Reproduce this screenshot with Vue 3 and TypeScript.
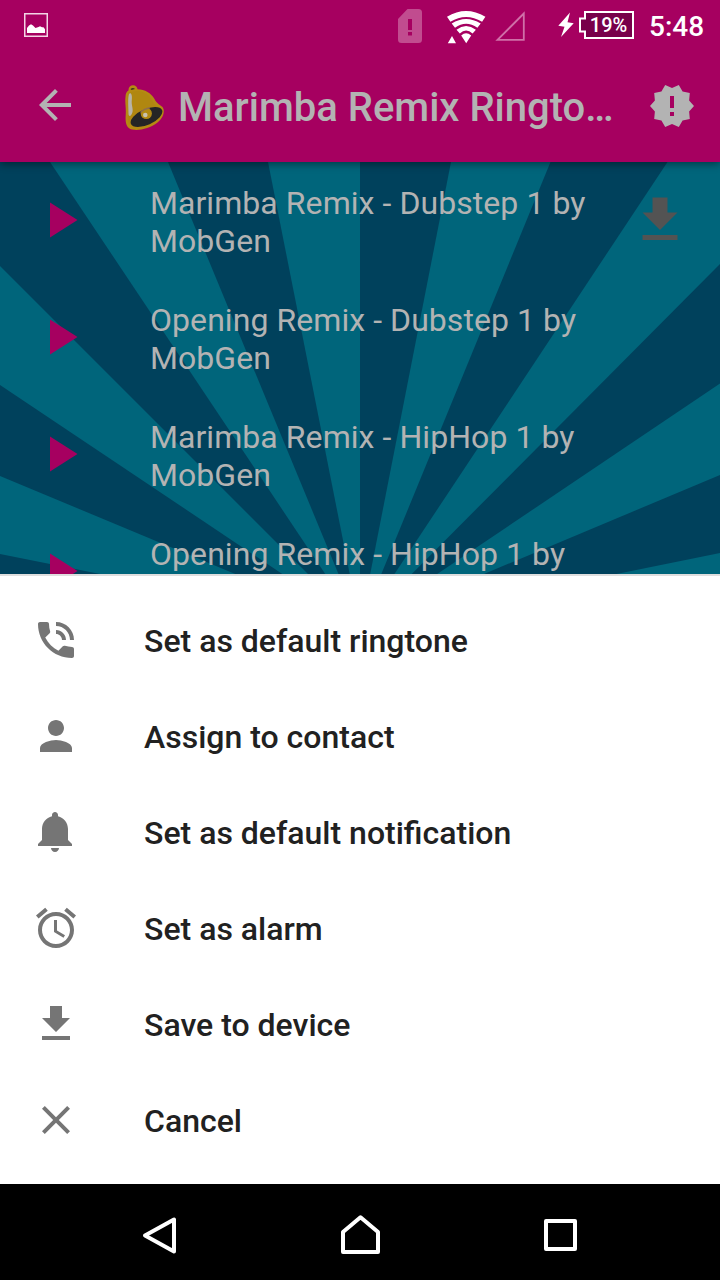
<script setup lang="ts">
interface Action {
  label: string
  icon: string
}

const tracks: string[] = [
  'Marimba Remix - Dubstep 1 by MobGen',
  'Opening Remix - Dubstep 1 by MobGen',
  'Marimba Remix - HipHop 1 by MobGen',
  'Opening Remix - HipHop 1 by MobGen',
]

const downloadIcon = 'M19 9h-4V3H9v6H5l7 7 7-7zM5 18v2h14v-2H5z'

const actions: Action[] = [
  {
    label: 'Set as default ringtone',
    icon: 'M20 15.5c-1.25 0-2.45-.2-3.57-.57-.35-.11-.74-.03-1.02.24l-2.2 2.2c-2.83-1.44-5.15-3.75-6.59-6.59l2.2-2.21c.28-.26.36-.65.25-1C8.7 6.45 8.5 5.25 8.5 4c0-.55-.45-1-1-1H4c-.55 0-1 .45-1 1 0 9.39 7.61 17 17 17 .55 0 1-.45 1-1v-3.5c0-.55-.45-1-1-1zM19 12h2c0-4.97-4.03-9-9-9v2c3.87 0 7 3.13 7 7zm-4 0h2c0-2.76-2.24-5-5-5v2c1.66 0 3 1.34 3 3z',
  },
  {
    label: 'Assign to contact',
    icon: 'M12 12c2.21 0 4-1.79 4-4s-1.79-4-4-4-4 1.79-4 4 1.79 4 4 4zm0 2c-2.67 0-8 1.34-8 4v2h16v-2c0-2.66-5.33-4-8-4z',
  },
  {
    label: 'Set as default notification',
    icon: 'M11.5 22c1.1 0 2-.9 2-2h-4c0 1.1.9 2 2 2zm6.5-6v-5.5c0-3.07-2.13-5.64-5-6.32V3.5c0-.83-.67-1.5-1.5-1.5S10 2.67 10 3.5v.68c-2.87.68-5 3.25-5 6.32V16l-2 2v1h17v-1l-2-2z',
  },
  {
    label: 'Set as alarm',
    icon: 'M22 5.72l-4.6-3.86-1.29 1.53 4.6 3.86L22 5.72zM7.88 3.39L6.6 1.86 2 5.71l1.29 1.53 4.59-3.85zM12.5 8H11v6l4.75 2.85.75-1.23-4-2.37V8zM12 4c-4.97 0-9 4.03-9 9s4.02 9 9 9c4.97 0 9-4.03 9-9s-4.03-9-9-9zm0 16c-3.87 0-7-3.13-7-7s3.13-7 7-7 7 3.13 7 7-3.13 7-7 7z',
  },
  { label: 'Save to device', icon: downloadIcon },
  {
    label: 'Cancel',
    icon: 'M19 6.41L17.59 5 12 10.59 6.41 5 5 6.41 10.59 12 5 17.59 6.41 19 12 13.41 17.59 19 19 17.59 13.41 12z',
  },
]
</script>

<template>
  <div class="screen">
    <header class="top">
      <div class="status">
        <svg class="picture" viewBox="0 0 24 24" width="24" height="24">
          <rect x=".75" y=".75" width="22.5" height="22.5" fill="none" stroke="#f3d5e5" stroke-width="1.5" />
          <path d="M3 20v-5l2-2.500 2-1.300 2 1.300 2.500 2.500 3-1 1.500-.8 2 1 1.500 0 1.500 2v3.800z" fill="#fff" />
        </svg>
        <svg class="sim" viewBox="0 0 24 34" width="24" height="34">
          <path fill="#c14c8f" fill-rule="evenodd" d="M9.500 0H20.500Q24 0 24 3.500V30.500Q24 34 20.500 34H3.500Q0 34 0 30.500V10zM10 10v11h4V10zM10 23v3.500h4V23z" />
        </svg>
        <svg class="wifi" viewBox="0 0 40 33" width="40" height="33">
          <path
            fill="#fff"
            d="M0 5.700Q19-5.600 38.400 5.700L35.100 10.700Q19 1.100 3.400 10.700zM4.700 12.500Q19 3.500 33.700 12.500L30.400 16.800Q19 8.600 8 16.800zM9.500 18.700Q19 11.500 28.900 18.700L25.600 22.600Q19 16.300 12.800 22.600zM14.200 24.500Q19 20 24.200 24.500L19.200 32.200zM.8 32.200L5 25l4 7.200z"
          />
        </svg>
        <svg class="signal" viewBox="0 0 30 30" width="30" height="30">
          <path d="M2.500 28.900H28.800V2.500z" fill="none" stroke="#d070a8" stroke-width="1.800" />
        </svg>
        <svg class="bolt" viewBox="0 0 16 26" width="16" height="26">
          <path d="M12 .5L.3 13.800l6.200 1L3 25 15.700 11.200l-6.200-1z" fill="#fff" />
        </svg>
        <div class="battery">
          <svg viewBox="0 0 55 28" width="55" height="28">
            <path d="M6 1H54V27H6V20.500H1V7.500H6z" fill="#78004a" stroke="#fff" stroke-width="2" />
          </svg>
          <span>19%</span>
        </div>
        <span class="clock">5:48</span>
      </div>

      <div class="bar">
        <svg class="back" viewBox="0 0 24 24" width="48" height="48">
          <path d="M20 11H7.830l5.590-5.590L12 4l-8 8 8 8 1.410-1.410L7.830 13H20z" />
        </svg>
        <svg class="logo" viewBox="0 0 40 46" width="40" height="46">
          <path d="M4.500 5.500C4.300 2 6.500 .3 9 .3S13.500 2 13.500 4.300C21 4.500 27 8 30.500 14C33 19 36 19.500 38.500 22C41.500 26 39 33 33.500 37.500C26 43.500 15 46 8 44.500C2 43 1.200 37 1.700 30C2.200 22 .8 18 1.500 12C1.800 8 2.500 7 4.500 5.500z" fill="#b58a12" />
          <path d="M4 7.500C3 12 3.500 17 4 23C4.500 30 3 34 5 39C9 42 18 40 26 35.500C33 31 38 27 36 23.500C31 21 29 17 27 13.500C23 8 18 6 13 6z" fill="#b08710" />
          <ellipse cx="22.500" cy="32" rx="17" ry="7.800" transform="rotate(-24 22.500 32)" fill="#252525" />
          <circle cx="22.300" cy="28.500" r="5.600" fill="#b28912" />
          <path d="M16.500 27.500Q20 23.800 26 22.800" fill="none" stroke="#8f6e4d" stroke-width="1.500" />
          <circle cx="21.300" cy="30" r="2.300" fill="#c9c2ae" />
          <path d="M5 9C6.500 7 8.500 9 7.800 15C7.200 20 9.300 23 8.500 27C7.300 31 5 32.500 4.500 29C4.500 22 3.500 14 5 9z" fill="#b7b3aa" />
          <path d="M6.500 4Q9 1.800 11 4L7.500 5z" fill="#3a3420" />
        </svg>
        <h1>Marimba Remix Ringto…</h1>
        <svg class="alert" viewBox="0 0 24 24" width="48" height="48">
          <path d="M23 12l-2.440-2.780.34-3.680-3.610-.82-1.890-3.180L12 3 8.600 1.540 6.710 4.720l-3.610.81.34 3.680L1 12l2.440 2.780-.34 3.690 3.610.82 1.890 3.180L12 21l3.400 1.460 1.890-3.180 3.610-.82-.34-3.680L23 12zm-10 5h-2v-2h2v2zm0-4h-2V7h2v6z" />
        </svg>
      </div>
    </header>

    <main class="list">
      <svg class="rays" viewBox="0 162 720 412" width="720" height="412">
        <g fill="#00415c">
          <path d="M360 626L0 266V162H50z" />
          <path d="M360 626L168 162H268z" />
          <path d="M360 626V162H451z" />
          <path d="M360 626L550.500 162H667.500z" />
          <path d="M360 626L720 264V383.500z" />
          <path d="M360 626L720 475V553z" />
          <path d="M360 626L0 385V476z" />
          <path d="M360 626L0 554V626z" />
        </g>
      </svg>
      <div v-for="(track, index) in tracks" :key="track" class="track">
        <svg class="play" viewBox="0 0 24 24" width="60" height="60"><path d="M8 5v14l11-7z" /></svg>
        <p>{{ track }}</p>
        <svg v-if="index === 0" class="download" viewBox="0 0 24 24" width="60" height="60"><path :d="downloadIcon" /></svg>
      </div>
    </main>

    <section class="sheet">
      <div v-for="action in actions" :key="action.label" class="action">
        <svg viewBox="0 0 24 24" width="48" height="48"><path :d="action.icon" /></svg>
        <span>{{ action.label }}</span>
      </div>
    </section>

    <nav class="nav">
      <svg viewBox="0 0 40 40" width="40" height="40"><path d="M34 3.500V35.500L5 19.500z" /></svg>
      <svg viewBox="0 0 40 40" width="40" height="40"><path d="M3 36V16L20.500 1.200 38 16V36z" /></svg>
      <svg viewBox="0 0 40 40" width="40" height="40"><path d="M6 5H35V33H6z" /></svg>
    </nav>
  </div>
</template>

<style>
body {
  margin: 0;
}
</style>

<style scoped>
.screen {
  width: 720px;
  height: 1280px;
  display: flex;
  flex-direction: column;
  overflow: hidden;
  font-family: Roboto, "Noto Sans", sans-serif;
}
svg {
  display: block;
  flex: none;
}
.top {
  position: relative;
  z-index: 1;
  height: 162px;
  flex: none;
  background: #a60060;
  box-shadow: 0 2px 8px rgba(0, 0, 0, 0.45);
}
.status {
  display: flex;
  align-items: flex-start;
  height: 50px;
  color: #fff;
}
.picture {
  margin: 13px 0 0 24px;
}
.sim {
  margin: 9px 0 0 350px;
}
.wifi {
  margin: 11px 0 0 25px;
}
.signal {
  margin: 11px 0 0 8px;
}
.bolt {
  margin: 12px 0 0 33px;
}
.battery {
  margin: 11px 0 0 5px;
  display: grid;
}
.battery > * {
  grid-area: 1 / 1;
}
.battery span {
  padding-left: 4px;
  text-align: center;
  font-size: 20px;
  font-weight: 500;
  line-height: 28px;
}
.clock {
  margin: 10px 0 0 15px;
  font-size: 28px;
  font-weight: 500;
  line-height: 34px;
}
.bar {
  display: flex;
  align-items: center;
  height: 112px;
  padding: 0 24px 0 31px;
  color: #b3b3b3;
  fill: #b3b3b3;
}
.back {
  margin-top: -3px;
}
.logo {
  margin: 4px 0 0 45px;
}
h1 {
  width: 440px;
  margin: 4px 31px 0 14px;
  font-size: 40px;
  font-weight: 500;
  line-height: 48px;
  white-space: nowrap;
}
.list {
  position: relative;
  height: 412px;
  flex: none;
  overflow: hidden;
  background: #00657b;
}
.rays {
  position: absolute;
  inset: 0;
}
.track {
  position: relative;
  display: flex;
  align-items: center;
  height: 117px;
  padding: 0 30px;
}
.play {
  margin-bottom: 1px;
  fill: #a60060;
}
.download {
  margin: 0 0 1px auto;
  fill: #535353;
}
.track p {
  width: 460px;
  margin: 2px 0 0 60px;
  color: #b3b3b3;
  font-size: 32px;
  line-height: 38px;
  letter-spacing: 0.06px;
}
.sheet {
  box-sizing: border-box;
  height: 610px;
  flex: none;
  padding: 16px 32px;
  border-top: 2px solid #dedede;
  background: #fff;
}
.action {
  display: flex;
  align-items: center;
  gap: 64px;
  height: 96px;
  color: #212121;
  fill: #757575;
  font-size: 32px;
  font-weight: 500;
  line-height: 38px;
}
.action span {
  margin-top: 2px;
}
.nav {
  display: flex;
  justify-content: center;
  gap: 160px;
  height: 64px;
  padding-top: 32px;
  background: #000;
}
.nav svg {
  overflow: visible;
}
.nav path {
  fill: none;
  stroke: #fff;
  stroke-width: 4;
  stroke-linejoin: round;
}
</style>
